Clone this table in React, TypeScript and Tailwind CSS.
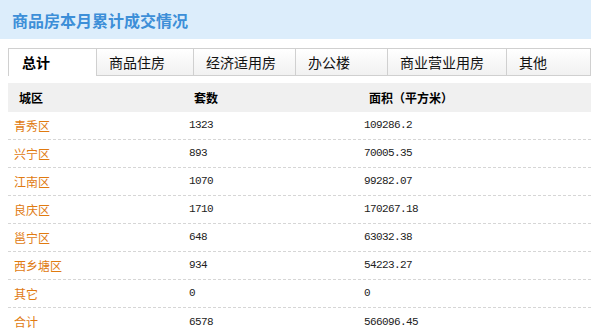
import React from 'react';

const tabs = [
  { label: '总计', w: 'w-[89px]' },
  { label: '商品住房', w: 'w-[97px]' },
  { label: '经济适用房', w: 'w-[102px]' },
  { label: '办公楼', w: 'w-[92px]' },
  { label: '商业营业用房', w: 'w-[119px]' },
  { label: '其他', w: 'flex-1' },
];

const rows = [
  ['青秀区', '1323', '109286.2'],
  ['兴宁区', '893', '70005.35'],
  ['江南区', '1070', '99282.07'],
  ['良庆区', '1710', '170267.18'],
  ['邕宁区', '648', '63032.38'],
  ['西乡塘区', '934', '54223.27'],
  ['其它', '0', '0'],
  ['合计', '6578', '566096.45'],
];

const cjk = "font-['Noto_Sans_CJK_SC',sans-serif]";
const num = "font-['Liberation_Mono',monospace] text-[11px] tracking-[-0.6px] text-[#222]";

export default function App() {
  return (
    <div className={`w-[591px] h-[335px] overflow-hidden bg-white ${cjk}`}>
      {/* title bar */}
      <div className="h-[39px] bg-[#dcedfb] flex items-center pl-[12px]">
        <span className="text-[16px] font-bold text-[#3d8fd8] leading-none">商品房本月累计成交情况</span>
      </div>

      {/* tabs */}
      <div className="mt-[9px] ml-[8px] flex h-[28px]">
        {tabs.map((t, i) =>
          i === 0 ? (
            <div
              key={t.label}
              className={`${t.w} shrink-0 bg-white border-l border-t border-r border-[#d0d0d0] pl-[13px] flex items-center text-[14px] font-bold text-black`}
            >
              {t.label}
            </div>
          ) : (
            <div
              key={t.label}
              className={`${t.w} shrink-0 bg-gradient-to-b from-white to-[#f1f1f1] border-t border-r border-b border-[#d0d0d0] pl-[12px] flex items-center text-[14px] text-[#111]`}
            >
              {t.label}
            </div>
          )
        )}
      </div>

      {/* table */}
      <div className="mt-[7px] ml-[8px]">
        <div className="h-[29px] bg-[#f0f0f0] grid grid-cols-[175px_175px_1fr] items-center text-[12px] font-bold text-black">
          <div className="pl-[11px]">城区</div>
          <div className="pl-[11px]">套数</div>
          <div className="pl-[11px]">面积（平方米）</div>
        </div>
        {rows.map(([name, count, area], i) => (
          <div
            key={name}
            className={`h-[28px] grid grid-cols-[175px_175px_1fr] items-center ${
              i < rows.length - 1 ? 'border-b border-dashed border-[#d6d6d6]' : ''
            }`}
          >
            <div className="pl-[6px] text-[12px] text-[#e07a10]">{name}</div>
            <div className={`pl-[6px] ${num}`}>{count}</div>
            <div className={`pl-[6px] ${num}`}>{area}</div>
          </div>
        ))}
      </div>
    </div>
  );
}
